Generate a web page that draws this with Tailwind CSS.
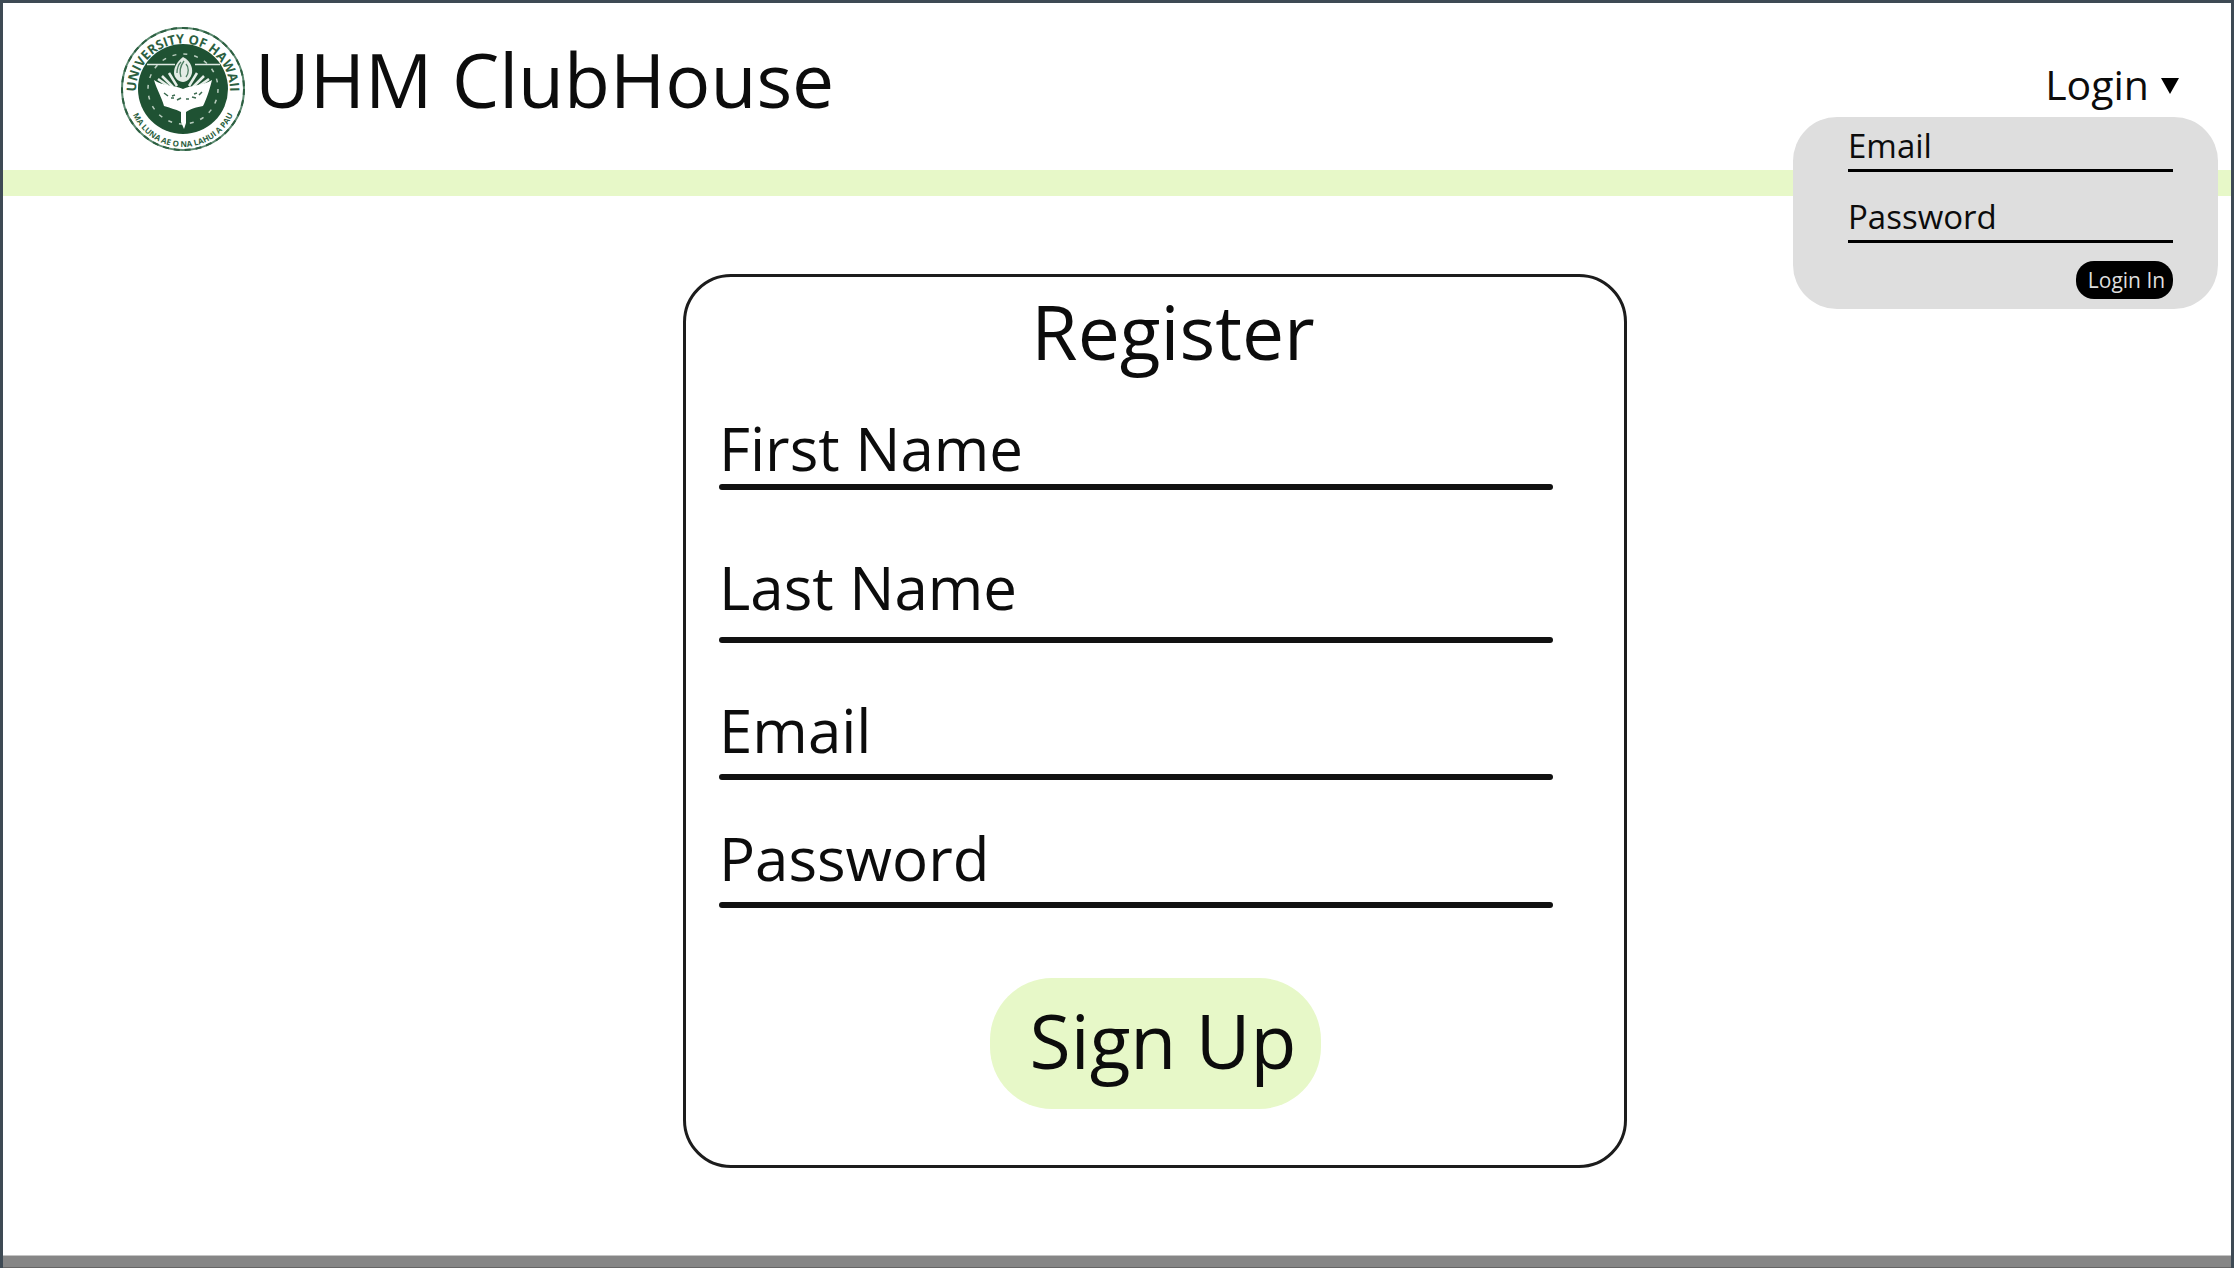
<!DOCTYPE html>
<html lang="en">
<head>
<meta charset="utf-8">
<meta name="viewport" content="width=device-width, initial-scale=1">
<title>UHM ClubHouse</title>
<script src="https://cdn.jsdelivr.net/npm/@tailwindcss/browser@4"></script>
</head>
<body class="flex min-h-screen flex-col border-x-3 border-t-3 border-[#3e4a54] bg-white font-['Open_Sans',sans-serif] text-[#0c0c0c]">

<header class="flex h-[193px] items-start justify-between border-b-26 border-[#e7f8c8] pt-[23px] pr-[52px] pl-[117px]">
  <a href="#" class="flex items-start gap-[9px]">
    <svg class="size-[126px] shrink-0" viewBox="0 0 126 126" fill="none" aria-hidden="true">
      <defs>
        <path id="seal-top" d="M18 78a47 47 0 1 1 90 0"/>
        <path id="seal-bottom" d="M8 66a55 55 0 0 0 110 0"/>
      </defs>
      <circle cx="63" cy="63" r="61" stroke="#5c8a70" stroke-width="2"/>
      <circle cx="63" cy="63" r="61" stroke="#2c5f41" stroke-width="2" stroke-dasharray="6 5"/>
      <circle cx="63" cy="63" r="45" fill="#1f5233"/>
      <circle cx="63" cy="63" r="35" stroke="#b9cdbf" stroke-width="1.5" stroke-dasharray="4 7"/>
      <g fill="#2c5f41" font-family="Open Sans, sans-serif" font-weight="700">
        <text font-size="13"><textPath href="#seal-top" startOffset="50%" text-anchor="middle">UNIVERSITY OF HAWAII</textPath></text>
        <text font-size="8"><textPath href="#seal-bottom" startOffset="50%" text-anchor="middle">MA LUNA AE O NA LAHUI A PAU</textPath></text>
      </g>
      <path d="M27 38.500h28M75 38.500h25" stroke="#dfe9e2" stroke-width="1.500"/>
      <path d="M42 50l11 11M49 47l8 13M84 50L73 61M77 47l-8 13M38 53l10 7M89 53l-10 7" stroke="#e7efe9" stroke-width="2.500"/>
      <path d="M34 54c8 6 21 5 29 9 8-4 19-3 29-9-3 12-6 20-9 26-6 1-13 3-17 6v11l-2 6-3-7V86c-6-3-11-4-17-6-2-8-7-16-10-26z" fill="#fff"/>
      <path d="M63 31c6 3 10 9 9 16-1 5-5 9-9 9s-9-4-9-9c0-7 4-12 9-16z" fill="#e4ece6"/>
      <path d="M61 51c-2-6 0-12 3-16M66 51c3-4 3-10 0-13M57 47c0-5 2-9 4-11" stroke="#4d7d62" stroke-width="1.300"/>
      <path d="M44 67l4 3M51 72h3M57 74l4-2M66 73h3M72 71l4 1M79 69l3-3M52 70l3-1M74 68l3-1" stroke="#3c6b50" stroke-width="1.500"/>
    </svg>
    <h1 class="mt-[13px] text-[75px] leading-[80px] whitespace-nowrap">UHM ClubHouse</h1>
  </a>

  <div class="relative mt-[34px]">
    <button type="button" aria-expanded="true" class="flex items-center gap-3 text-[41px] leading-[48px]">
      Login
      <svg class="mt-1 h-[16px] w-[18px]" viewBox="0 0 18 16" aria-hidden="true"><path d="M0 0h18L9 16z" fill="#000"/></svg>
    </button>
    <form class="absolute top-[57px] -right-[39px] flex h-[192px] w-[425px] flex-col rounded-[44px] bg-[#dedede] pt-[9px] pr-[45px] pl-[55px] text-[33px] leading-[40px]">
      <div class="grid border-b-3 border-black pb-[3px]">
        <label for="login-email" class="col-start-1 row-start-1">Email</label>
        <input id="login-email" type="email" class="col-start-1 row-start-1 w-full bg-transparent outline-none">
      </div>
      <div class="mt-[25px] grid border-b-3 border-black pb-[3px]">
        <label for="login-password" class="col-start-1 row-start-1">Password</label>
        <input id="login-password" type="password" class="col-start-1 row-start-1 w-full bg-transparent outline-none">
      </div>
      <button type="submit" class="mt-[18px] h-[38px] w-[97px] self-end rounded-[18px] bg-black pl-1 text-[21px] leading-[38px] whitespace-nowrap text-[#dedede]">Login In</button>
    </form>
  </div>
</header>

<main class="flex flex-1 justify-center pt-[78px] pb-[87px] pl-[76px]">
  <form class="flex w-full max-w-[944px] flex-col self-start rounded-[48px] border-3 border-[#1c1c1c] pt-[14px] pr-[71px] pb-[56px] pl-[33px] text-[60px] leading-[72px]">
    <h2 class="pl-[74px] text-center text-[75px] leading-[80px]">Register</h2>

    <div class="mt-[41px] grid">
      <label for="first-name" class="col-start-1 row-start-1">First Name</label>
      <input id="first-name" type="text" class="col-start-1 row-start-1 w-full bg-transparent outline-none">
      <span class="h-[6px] rounded-full bg-[#111]"></span>
    </div>
    <div class="mt-[61px] grid">
      <label for="last-name" class="col-start-1 row-start-1">Last Name</label>
      <input id="last-name" type="text" class="col-start-1 row-start-1 w-full bg-transparent outline-none">
      <span class="mt-[14px] h-[6px] rounded-full bg-[#111]"></span>
    </div>
    <div class="mt-[51px] grid">
      <label for="email" class="col-start-1 row-start-1">Email</label>
      <input id="email" type="email" class="col-start-1 row-start-1 w-full bg-transparent outline-none">
      <span class="mt-2 h-[6px] rounded-full bg-[#111]"></span>
    </div>
    <div class="mt-[42px] grid">
      <label for="password" class="col-start-1 row-start-1">Password</label>
      <input id="password" type="password" class="col-start-1 row-start-1 w-full bg-transparent outline-none">
      <span class="mt-2 h-[6px] rounded-full bg-[#111]"></span>
    </div>

    <div class="mt-[70px] flex justify-center pl-[38px]">
      <button type="submit" class="h-[131px] w-[331px] rounded-[62px] bg-[#e7f8c8] pb-2 pl-4 text-[75px] leading-[80px] whitespace-nowrap">Sign Up</button>
    </div>
  </form>
</main>

<footer class="h-[13px] border-t border-b border-t-[#c4c4c4] border-b-[#666] bg-[#868686]"></footer>
</body>
</html>
